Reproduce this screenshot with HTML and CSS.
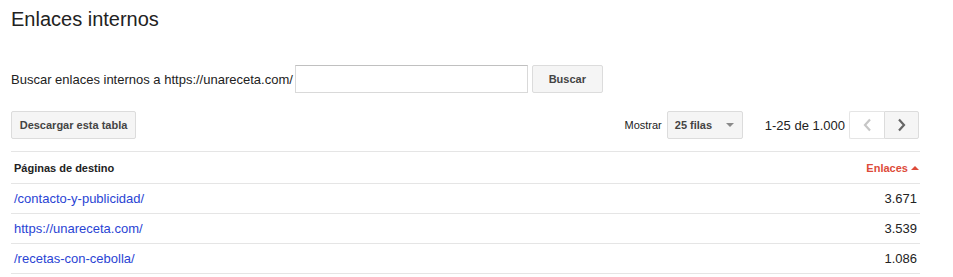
FILE: index.html
```html
<!DOCTYPE html>
<html lang="es">
<head>
  <meta charset="UTF-8">
  <title>Enlaces internos</title>
  <link rel="stylesheet" href="styles.css">
</head>
<body>

<!-- Título -->
<h1 class="titulo">Enlaces internos</h1>

<!-- Buscador -->
<form class="buscador">
  <label for="busqueda">Buscar enlaces internos a https://unareceta.com/</label>
  <input type="text" id="busqueda">
  <button type="button" class="boton boton-buscar">Buscar</button>
</form>

<!-- Barra de herramientas -->
<div class="toolbar">
  <button type="button" class="boton boton-descargar">Descargar esta tabla</button>
  <div class="toolbar-derecha">
    <span class="mostrar">Mostrar</span>
    <div class="selector">
      <span>25 filas</span>
      <span class="flecha"></span>
    </div>
    <span class="rango">1-25 de 1.000</span>
    <div class="paginador">
      <button type="button" class="pag pag-prev" disabled>
        <svg width="10" height="14" viewBox="0 0 10 14"><path d="M8 1.5 L3 7 L8 12.5" fill="none" stroke="#c6c6c6" stroke-width="2.2"/></svg>
      </button>
      <button type="button" class="pag pag-next">
        <svg width="10" height="14" viewBox="0 0 10 14"><path d="M2 1.5 L7 7 L2 12.5" fill="none" stroke="#666" stroke-width="2.2"/></svg>
      </button>
    </div>
  </div>
</div>

<!-- Tabla -->
<table class="tabla">
  <thead>
    <tr>
      <th class="col-pagina">Páginas de destino</th>
      <th class="col-enlaces">Enlaces <span class="orden"></span></th>
    </tr>
  </thead>
  <tbody>
    <tr>
      <td><a href="#">/contacto-y-publicidad/</a></td>
      <td class="num">3.671</td>
    </tr>
    <tr>
      <td><a href="#">https://unareceta.com/</a></td>
      <td class="num">3.539</td>
    </tr>
    <tr>
      <td><a href="#">/recetas-con-cebolla/</a></td>
      <td class="num">1.086</td>
    </tr>
  </tbody>
</table>

</body>
</html>
```

FILE: styles.css
```css
body {
  font-family: "Liberation Sans", Arial, sans-serif;
  margin: 0;
  padding: 7px 33px 0 11px;
  background: #fff;
  color: #222;
}

.titulo {
  font-size: 20px;
  font-weight: normal;
  line-height: 24px;
  margin: 0;
  color: #222;
}

.buscador {
  display: flex;
  align-items: center;
  margin-top: 34px;
  height: 28px;
}

.buscador label {
  font-size: 13px;
  color: #222;
  margin-right: 2px;
}

.buscador input {
  width: 233px;
  height: 28px;
  box-sizing: border-box;
  border: 1px solid #d9d9d9;
  border-top-color: #c0c0c0;
  margin: 0 4px 0 0;
  padding: 0 6px;
}

.boton {
  font-family: inherit;
  font-size: 11px;
  font-weight: bold;
  color: #444;
  background: #f5f5f5;
  border: 1px solid #dcdcdc;
  border-radius: 2px;
  height: 28px;
  padding: 0;
  white-space: nowrap;
  cursor: pointer;
}

.boton-buscar {
  width: 71px;
}

.boton-descargar {
  width: 125px;
}

.toolbar {
  display: flex;
  justify-content: space-between;
  align-items: center;
  margin-top: 18px;
  width: 908px;
}

.toolbar-derecha {
  display: flex;
  align-items: center;
}

.mostrar {
  font-size: 11px;
  color: #222;
  margin-right: 5px;
}

.selector {
  display: flex;
  align-items: center;
  justify-content: space-between;
  box-sizing: border-box;
  width: 76px;
  height: 28px;
  padding: 0 8px 0 7px;
  background: #f5f5f5;
  border: 1px solid #dcdcdc;
  border-radius: 2px;
  font-size: 11px;
  font-weight: bold;
  color: #444;
}

.flecha {
  width: 0;
  height: 0;
  border-left: 4px solid transparent;
  border-right: 4px solid transparent;
  border-top: 4px solid #8a8a8a;
}

.rango {
  font-size: 13px;
  color: #222;
  margin: 0 4px 0 22px;
}

.paginador {
  display: flex;
}

.pag {
  width: 35px;
  height: 28px;
  box-sizing: border-box;
  border: 1px solid #dcdcdc;
  display: flex;
  align-items: center;
  justify-content: center;
  padding: 0;
  cursor: pointer;
}

.pag-prev {
  background: #fff;
  border-right: none;
  border-radius: 2px 0 0 2px;
  border-color: #e5e5e5;
}

.pag-next {
  background: #f5f5f5;
  border-radius: 0 2px 2px 0;
}

.tabla {
  margin-top: 12px;
  width: 909px;
  border-collapse: collapse;
}

.tabla th,
.tabla td {
  border-top: 1px solid #e5e5e5;
  border-bottom: 1px solid #e5e5e5;
  padding: 0 3px;
  text-align: left;
}

.tabla th {
  height: 31px;
  font-size: 11px;
  font-weight: bold;
  color: #222;
}

.tabla td {
  height: 29px;
  font-size: 13px;
}

.tabla a {
  color: #2a44d4;
  text-decoration: none;
}

.tabla .col-enlaces {
  text-align: right;
  color: #dd4b39;
  padding-right: 1px;
}

.orden {
  display: inline-block;
  width: 0;
  height: 0;
  border-left: 4px solid transparent;
  border-right: 4px solid transparent;
  border-bottom: 4px solid #dd4b39;
  vertical-align: 2px;
}

.tabla .num {
  text-align: right;
  color: #222;
}
```
